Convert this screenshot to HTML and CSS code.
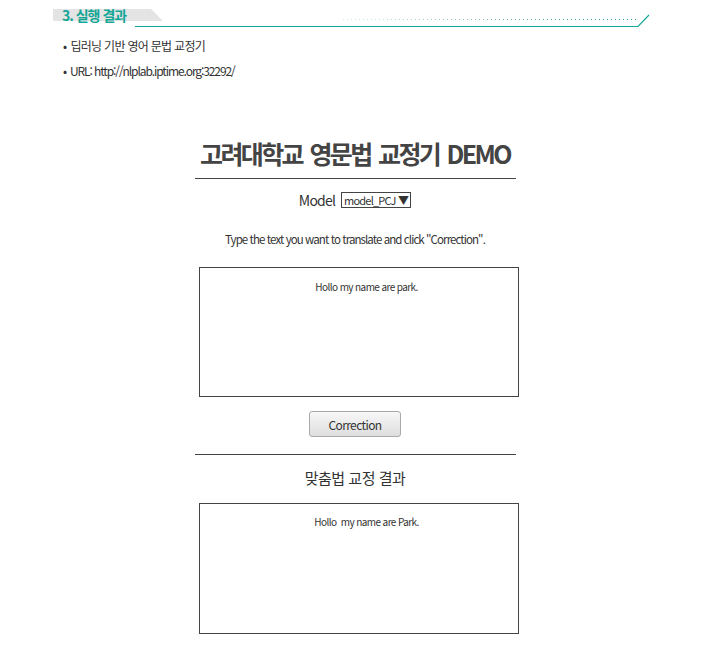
FILE: index.html
```html
<!DOCTYPE html>
<html lang="ko">
<head>
<meta charset="utf-8">
<title>실행 결과</title>
<link rel="stylesheet" href="styles.css">
</head>
<body>
<div class="sec-head">
  <svg class="sec-deco" width="710" height="30" viewBox="0 0 710 30" aria-hidden="true">
    <defs>
      <linearGradient id="dots" x1="343" y1="0" x2="635" y2="0" gradientUnits="userSpaceOnUse">
        <stop offset="0" stop-color="#cfe9e6"/>
        <stop offset="1" stop-color="#14a494"/>
      </linearGradient>
    </defs>
    <polygon points="53,9 151,9 163,21 53,21" fill="#e4e4e4"/>
    <line x1="343" y1="19.5" x2="636" y2="19.5" stroke="url(#dots)" stroke-width="1" stroke-dasharray="1 3"/>
    <polyline points="135,26.5 638,26.5 649,15" fill="none" stroke="#14a99a" stroke-width="1.2"/>
  </svg>
  <h2 class="sec-title">3. 실행 결과</h2>
</div>
<ul class="bullets">
  <li>딥러닝 기반 영어 문법 교정기</li>
  <li class="url">URL: http://nlplab.iptime.org:32292/</li>
</ul>

<main class="demo">
  <h1 class="demo-title">고려대학교 영문법 교정기 DEMO</h1>
  <hr class="rule">
  <div class="model-row">
    <span class="model-label">Model</span>
    <span class="model-select">model_PCJ ▼</span>
  </div>
  <p class="hint">Type the text you want to translate and click "Correction".</p>
  <div class="box"><p class="box-text">Hollo my name are park.</p></div>
  <div class="btn-row"><button class="btn" type="button">Correction</button></div>
  <hr class="rule rule-2">
  <h3 class="result-title">맞춤법 교정 결과</h3>
  <div class="box result-box"><p class="box-text">Hollo&nbsp; my name are Park.</p></div>
</main>
</body>
</html>
```
FILE: styles.css
```css
* { box-sizing: border-box; }
html, body { margin: 0; padding: 0; background: #fff; }
body {
  font-family: "Noto Sans CJK KR", "Noto Sans", sans-serif;
  color: #333;
  width: 710px;
}
.sec-head {
  position: relative;
  height: 30px;
}
.sec-deco {
  position: absolute;
  left: 0;
  top: 0;
}
.sec-title {
  position: relative;
  margin: 0;
  padding: 7px 0 0 62px;
  font-size: 14px;
  line-height: 17px;
  font-weight: 700;
  color: #14a696;
  letter-spacing: -1px;
}
.bullets {
  list-style: none;
  margin: 3px 0 0 0;
  padding: 0 0 0 63px;
  font-size: 12px;
  line-height: 25px;
  color: #333;
  letter-spacing: -0.7px;
}
.bullets .url { letter-spacing: -1.1px; }
.bullets li::before {
  content: "•";
  margin-right: 4px;
}
.demo {
  width: 321px;
  margin: 52px auto 0 auto;
  display: flex;
  flex-direction: column;
  align-items: center;
}
.demo-title {
  margin: 0;
  font-size: 25px;
  line-height: 36px;
  font-weight: 700;
  color: #444;
  letter-spacing: -2.6px;
  word-spacing: 3px;
  white-space: nowrap;
}
.rule {
  width: 321px;
  margin: 7px 0 0 0;
  border: 0;
  border-top: 1px solid #444;
  height: 0;
}
.model-row {
  margin-top: 11px;
  height: 20px;
  display: flex;
  align-items: center;
  gap: 6px;
  font-size: 14px;
  color: #333;
}
.model-label { letter-spacing: -0.8px; }
.model-select {
  border: 1px solid #444;
  height: 16px;
  line-height: 14px;
  font-size: 11px;
  padding: 0 2px;
  letter-spacing: -0.8px;
}
.hint {
  margin: 19px 0 0 0;
  font-size: 11.5px;
  line-height: 20px;
  letter-spacing: -0.92px;
  white-space: nowrap;
}
.box {
  align-self: flex-start;
  margin: 18px 0 0 4px;
  width: 320px;
  height: 130px;
  border: 1px solid #444;
}
.box-text {
  margin: 0;
  padding: 12px 0 0 16px;
  text-align: center;
  font-size: 10px;
  line-height: 14px;
  letter-spacing: -0.6px;
  color: #333;
}
.btn-row { margin-top: 14px; }
.btn {
  display: block;
  width: 92px;
  height: 26px;
  border: 1px solid #a9a9a9;
  border-radius: 3px;
  background: linear-gradient(#f7f7f7, #dedede);
  font-family: inherit;
  font-size: 12px;
  color: #333;
  letter-spacing: -0.6px;
  padding: 0;
}
.rule-2 { margin-top: 17px; }
.result-title {
  margin: 12px 0 0 0;
  font-size: 15px;
  line-height: 22px;
  font-weight: 400;
  color: #333;
  letter-spacing: -0.5px;
}
.result-box {
  margin-top: 14px;
  height: 131px;
}
.result-box .box-text { padding-top: 11px; }
```
